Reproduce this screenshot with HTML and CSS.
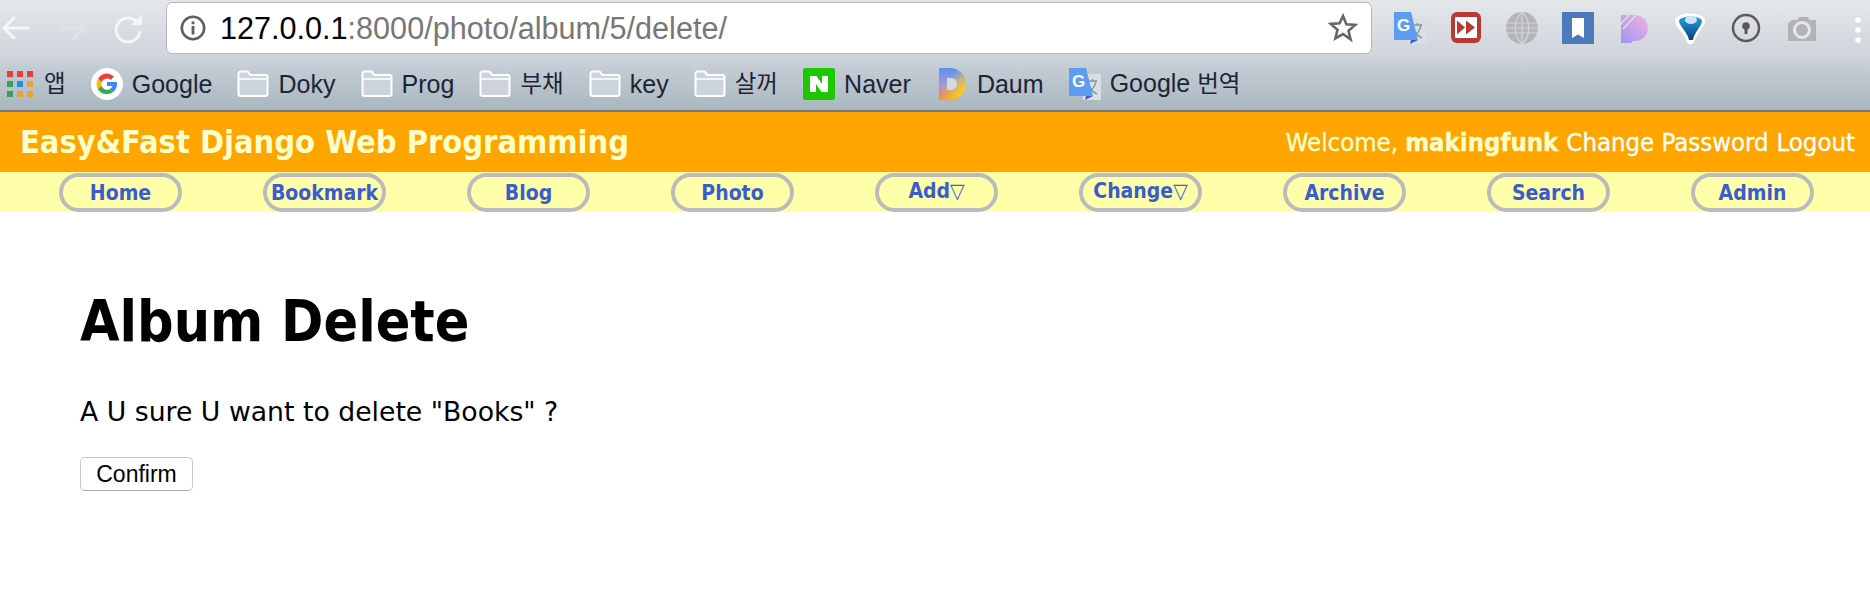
FILE: index.html
```html
<!DOCTYPE html>
<html lang="en">
<head>
  <meta charset="UTF-8">
  <title>Album Delete</title>
  <link rel="stylesheet" href="styles.css">
</head>
<body>

  <!-- Browser toolbar -->
  <div class="chrome">
    <div class="toolbar">
      <div class="navBtns">
        <svg class="icon32" viewBox="0 0 32 32"><path d="M29 15H5M15 4 4 15l11 11" fill="none" stroke="#f4f6f7" stroke-width="3"/></svg>
        <svg class="icon32" viewBox="0 0 32 32"><path d="M4 15h24M17 4l11 11-11 11" fill="none" stroke="#dfe3e6" stroke-width="3"/></svg>
        <svg class="icon32" viewBox="0 0 32 32"><path d="M25 9a12 12 0 1 0 3 9" fill="none" stroke="#f4f6f7" stroke-width="3"/><path d="M19 12h11V2z" fill="#f4f6f7"/></svg>
      </div>
      <div class="addressBar">
        <svg class="infoIcon" viewBox="0 0 26 26"><circle cx="13" cy="13" r="11.2" fill="none" stroke="#5f5f5f" stroke-width="2.6"/><path d="M11.6 6.5h2.8v2.8h-2.8zM11.6 11h2.8v8.5h-2.8z" fill="#5f5f5f"/></svg>
        <span class="url"><span class="urlHost">127.0.0.1</span>:8000/photo/album/5/delete/</span>
        <svg class="starIcon" viewBox="0 0 30 30"><path d="m15 3 3.4 8.2 8.9.7-6.8 5.8 2.1 8.7L15 21l-7.6 4.4 2.1-8.7-6.8-5.8 8.9-.7z" fill="none" stroke="#666" stroke-width="2.6"/></svg>
      </div>
      <div class="extensions">
        <svg class="icon32" viewBox="0 0 32 32"><rect x="14" y="6" width="18" height="26" rx="1" fill="#dcdfe1"/><path d="m19 13 h9M23.500 11v2M27 13c-1 6-5 10-9 12M20 17c1 4 4 7 8 9" fill="none" stroke="#7f9aa0" stroke-width="1.500"/><path d="M0 0h17l7 28H0z" fill="#5d9cf2"/><path d="M17 28h7l-8 4z" fill="#4a56c0"/><text class="gLetter" x="3" y="19">G</text></svg>
        <svg class="icon32" viewBox="0 0 32 32"><rect x="1" y="0" width="30" height="31" rx="6" fill="#b83a32"/><rect x="5" y="5" width="22" height="21" rx="1" fill="#fff"/><path d="M7 8.500 15 15.500 7 22.500zM16 8.500 25 15.500 16 22.500z" fill="#b83a32"/></svg>
        <svg class="icon32" viewBox="0 0 32 32"><circle cx="16" cy="16" r="16" fill="#b3b5b7"/><path d="M0 11h32M0 16h32M0 21h32M16 0v32M16 0c-9 8-9 24 0 32M16 0c9 8 9 24 0 32" fill="none" stroke="#d3d6d9" stroke-width="1.200"/></svg>
        <svg class="icon32" viewBox="0 0 32 32"><rect width="32" height="32" fill="#4e79bb"/><path d="M10 6h12v20l-6-3.500-6 3.500z" fill="#fff"/></svg>
        <svg class="icon32" viewBox="0 0 32 32"><defs><linearGradient id="pGrad" x1="0" y1="1" x2="1" y2="0"><stop offset="0" stop-color="#9f94f5"/><stop offset="1" stop-color="#f3b4da"/></linearGradient></defs><path d="M3 3h14a13 13 0 0 1 0 26h-3v2H3z" fill="url(#pGrad)"/><path d="M1 14 12 2M5 17 18 3" stroke="#dde0e4" stroke-width="1.500"/></svg>
        <svg class="icon32" viewBox="0 0 32 32"><defs><linearGradient id="vGrad" x1="0" y1="0" x2="0" y2="1"><stop offset="0" stop-color="#2a9de0"/><stop offset="1" stop-color="#0b3f78"/></linearGradient></defs><path d="M1 9C1-1 31-1 31 9c0 5-9 14-11 21-2 3-6 3-7 0C11 23 1 14 1 9z" fill="#fff"/><path d="M5 9c1-6 22-6 23 0 0 4-8 12-9 19h-4C14 21 5 13 5 9z" fill="url(#vGrad)"/><ellipse cx="17" cy="8" rx="6" ry="4" fill="#cbe6f6"/></svg>
        <svg class="icon32" viewBox="0 0 32 32"><circle cx="16" cy="16" r="13" fill="none" stroke="#5b5b5b" stroke-width="2.500"/><circle cx="16" cy="14" r="3.800" fill="#5b5b5b"/><rect x="14.500" y="15" width="3" height="7" fill="#5b5b5b"/></svg>
        <svg class="icon32" viewBox="0 0 32 32"><path d="M2 11l4-3h5l2-3h9l1 3h7v21H2z" fill="#b1b3b5"/><circle cx="16" cy="18" r="7.500" fill="none" stroke="#e6e8ea" stroke-width="3"/></svg>
        <svg class="dotsIcon" viewBox="0 0 28 32"><circle cx="16" cy="8" r="2.800" fill="#fff"/><circle cx="16" cy="18" r="2.800" fill="#fff"/><circle cx="16" cy="28" r="2.800" fill="#fff"/></svg>
      </div>
    </div>

    <!-- Bookmarks -->
    <div class="bookmarks">
      <a class="bookmark">
        <svg class="appsIcon" viewBox="0 0 26 26">
          <path d="M0 0h6v6H0zM10 0h6v6h-6zM20 0h6v6h-6z" fill="#ee3b36"/>
          <path d="M0 10h6v6H0z" fill="#3a9f5a"/><path d="M10 10h6v6h-6z" fill="#2b8ae8"/><path d="M20 10h6v6h-6z" fill="#f0a02c"/>
          <path d="M0 20h6v6H0z" fill="#3a9f5a"/><path d="M10 20h6v6h-6zM20 20h6v6h-6z" fill="#f0a02c"/>
        </svg>
        <span class="ko">앱</span>
      </a>
      <a class="bookmark">
        <svg class="bmIcon" viewBox="0 0 32 32">
          <circle cx="16" cy="16" r="16" fill="#fff"/>
          <path d="M16 10.500a5.500 5.500 0 0 1 3.700 1.400l3.300-3.300A10 10 0 0 0 7 11l3.800 3A5.600 5.600 0 0 1 16 10.500z" fill="#e94235"/>
          <path d="M10.600 18 6.800 21A10 10 0 0 1 7 11l3.800 3a5.600 5.600 0 0 0-.2 4z" fill="#fbbc05"/>
          <path d="M16 26a10 10 0 0 1-9.200-5l3.800-3a5.600 5.600 0 0 0 8.300 2.900l3.600 2.800A10 10 0 0 1 16 26z" fill="#34a853"/>
          <path d="M26 16c0-.7-.1-1.300-.2-2H16v4h5.500a5 5 0 0 1-2.600 2.900l3.600 2.800A10 10 0 0 0 26 16z" fill="#4285f4"/>
        </svg>
        Google
      </a>
      <a class="bookmark"><svg class="folderIcon" viewBox="0 0 32 28"><path d="M1.500 3.500a2 2 0 0 1 2-2h7l3 3.500h15a2 2 0 0 1 2 2v17a2 2 0 0 1-2 2h-25a2 2 0 0 1-2-2z" fill="#ccd3da" stroke="#fff" stroke-width="2"/><path d="M2 9h28" stroke="#fff" stroke-width="1.500"/></svg>Doky</a>
      <a class="bookmark"><svg class="folderIcon" viewBox="0 0 32 28"><path d="M1.500 3.500a2 2 0 0 1 2-2h7l3 3.500h15a2 2 0 0 1 2 2v17a2 2 0 0 1-2 2h-25a2 2 0 0 1-2-2z" fill="#ccd3da" stroke="#fff" stroke-width="2"/><path d="M2 9h28" stroke="#fff" stroke-width="1.500"/></svg>Prog</a>
      <a class="bookmark"><svg class="folderIcon" viewBox="0 0 32 28"><path d="M1.500 3.500a2 2 0 0 1 2-2h7l3 3.500h15a2 2 0 0 1 2 2v17a2 2 0 0 1-2 2h-25a2 2 0 0 1-2-2z" fill="#ccd3da" stroke="#fff" stroke-width="2"/><path d="M2 9h28" stroke="#fff" stroke-width="1.500"/></svg><span class="ko">부채</span></a>
      <a class="bookmark"><svg class="folderIcon" viewBox="0 0 32 28"><path d="M1.500 3.500a2 2 0 0 1 2-2h7l3 3.500h15a2 2 0 0 1 2 2v17a2 2 0 0 1-2 2h-25a2 2 0 0 1-2-2z" fill="#ccd3da" stroke="#fff" stroke-width="2"/><path d="M2 9h28" stroke="#fff" stroke-width="1.500"/></svg>key</a>
      <a class="bookmark"><svg class="folderIcon" viewBox="0 0 32 28"><path d="M1.500 3.500a2 2 0 0 1 2-2h7l3 3.500h15a2 2 0 0 1 2 2v17a2 2 0 0 1-2 2h-25a2 2 0 0 1-2-2z" fill="#ccd3da" stroke="#fff" stroke-width="2"/><path d="M2 9h28" stroke="#fff" stroke-width="1.500"/></svg><span class="ko">살꺼</span></a>
      <a class="bookmark"><svg class="bmIcon" viewBox="0 0 32 32"><rect width="32" height="32" rx="2" fill="#1ec800"/><path d="M7 8h6.500l5.500 8V8h6v16h-6.500L13 16v8H7z" fill="#fff"/></svg>Naver</a>
      <a class="bookmark"><svg class="bmIcon" viewBox="0 0 32 32"><defs><linearGradient id="dGrad" x1="0" y1="0" x2="0" y2="1"><stop offset="0" stop-color="#5b8ff0"/><stop offset=".55" stop-color="#a79bd8"/><stop offset="1" stop-color="#fb6a4f"/></linearGradient><linearGradient id="dGrad2" x1="0" y1="0" x2="1" y2="1"><stop offset=".35" stop-color="#fdd410" stop-opacity="0"/><stop offset=".85" stop-color="#fdd410"/></linearGradient></defs><path id="daumD" d="M3 0h11a16 16 0 0 1 0 32H3z" fill="url(#dGrad)"/><path d="M3 0h11a16 16 0 0 1 0 32H3z" fill="url(#dGrad2)"/><path d="M11 10h4a6 6 0 0 1 0 12h-4z" fill="#d5d8dc"/></svg>Daum</a>
      <a class="bookmark"><svg class="bmIcon" viewBox="0 0 32 32"><rect x="14" y="6" width="18" height="26" rx="1" fill="#dcdfe1"/><path d="m19 13 h9M23.500 11v2M27 13c-1 6-5 10-9 12M20 17c1 4 4 7 8 9" fill="none" stroke="#7f9aa0" stroke-width="1.500"/><path d="M0 0h17l7 28H0z" fill="#5d9cf2"/><path d="M17 28h7l-8 4z" fill="#4a56c0"/><text class="gLetter" x="3" y="19">G</text></svg><span>Google <span class="ko">번역</span></span></a>
    </div>
  </div>

  <!-- Site header -->
  <div class="header">
    <h3 class="siteTitle">Easy&amp;Fast Django Web Programming</h3>
    <div class="userLinks">
      <span class="welcome">Welcome, <b>makingfunk</b></span>
      <a href="#">Change Password</a>
      <a href="#">Logout</a>
    </div>
  </div>

  <!-- Menu -->
  <ul class="menu">
    <li><a href="#">Home</a></li>
    <li><a href="#">Bookmark</a></li>
    <li><a href="#">Blog</a></li>
    <li><a href="#">Photo</a></li>
    <li><a class="raised" href="#">Add&#9661;</a></li>
    <li><a class="raised" href="#">Change&#9661;</a></li>
    <li><a href="#">Archive</a></li>
    <li><a href="#">Search</a></li>
    <li><a href="#">Admin</a></li>
  </ul>

  <!-- Content -->
  <div class="content">
    <h1>Album Delete</h1>
    <form>
      <p>A U sure U want to delete "Books" ?</p>
      <input class="confirmBtn" type="submit" value="Confirm">
    </form>
  </div>

</body>
</html>
```

FILE: styles.css
```css
* {
  box-sizing: border-box;
}

body {
  margin: 0;
  background-color: #fff;
  font-family: "DejaVu Sans Condensed", "DejaVu Sans", sans-serif;
  overflow: hidden;
}

svg {
  display: block;
  flex-shrink: 0;
}

.gLetter {
  font-family: "Liberation Sans", sans-serif;
  font-size: 17px;
  font-weight: bold;
  fill: #fff;
}

/* Browser chrome */
.chrome {
  height: 112px;
  background: linear-gradient(#e4e7ea, #d0d5dc 50%, #c3ccd4 62%, #aab6bf);
  border-bottom: 2px solid #6f757b;
}

.toolbar {
  display: flex;
  height: 57px;
  padding-top: 2px;
}

.navBtns {
  display: flex;
  gap: 24px;
  width: 166px;
  padding-top: 11px;
}

.icon32 {
  width: 32px;
  height: 32px;
}

.addressBar {
  display: flex;
  align-items: center;
  flex: 1;
  height: 52px;
  margin-right: 22px;
  padding: 0 13px 0 13px;
  background-color: #fff;
  border: 1px solid #b4b8bc;
  border-radius: 6px;
}

.infoIcon {
  width: 26px;
  height: 26px;
}

.url {
  flex: 1;
  margin-left: 14px;
  font-family: "Liberation Sans", sans-serif;
  font-size: 30.6px;
  color: #777;
}

.urlHost {
  color: #000;
}

.starIcon {
  width: 30px;
  height: 30px;
}

.extensions {
  display: flex;
  gap: 24px;
  padding-top: 10px;
}

.dotsIcon {
  width: 28px;
  height: 32px;
}

.bookmarks {
  display: flex;
  align-items: center;
  gap: 25.1px;
  height: 53px;
  padding-left: 7px;
}

.bookmark {
  display: flex;
  align-items: center;
  gap: 9px;
  font-family: "Liberation Sans", "Noto Sans CJK KR", sans-serif;
  font-size: 25px;
  line-height: 30px;
  color: #1c2536;
}

.ko {
  font-size: 23.5px;
}

.appsIcon {
  width: 26px;
  height: 26px;
  margin-right: 2px;
}

.bmIcon {
  width: 32px;
  height: 32px;
}

.folderIcon {
  width: 32px;
  height: 28px;
}

/* Header */
.header {
  display: flex;
  justify-content: space-between;
  align-items: center;
  height: 60px;
  padding: 0 15px 0 20px;
  background-color: orange;
}

.siteTitle {
  margin: 0;
  font-size: 32.3px;
  font-weight: bold;
  color: #ffffcc;
}

.userLinks {
  display: flex;
  gap: 8px;
  font-size: 25.5px;
  color: #ffffcc;
  -webkit-text-stroke: 0.3px;
}

.userLinks a {
  color: #fff;
  text-decoration: none;
}

/* Menu */
.menu {
  display: grid;
  grid-template-columns: repeat(9, 123px);
  gap: 81px;
  height: 40px;
  margin: 0;
  padding: 1px 0 0 59px;
  list-style: none;
  background-color: #ffffaa;
}

.menu a {
  display: block;
  height: 39px;
  padding-top: 4px;
  border: 4px solid #bbb;
  border-radius: 20px;
  font-size: 21px;
  font-weight: bold;
  line-height: 24px;
  text-align: center;
  color: #3a5ccc;
  text-decoration: none;
}

.menu a.raised {
  padding-top: 2px;
}

/* Content */
.content {
  padding: 0 80px;
}

h1 {
  margin: 0;
  padding-top: 74px;
  font-size: 56.8px;
  line-height: 70px;
}

p {
  margin: 39px 0 0;
  font-family: "DejaVu Sans", sans-serif;
  font-size: 26.7px;
  line-height: 34px;
}

.confirmBtn {
  display: block;
  width: 113px;
  height: 34px;
  margin-top: 28px;
  background-color: #fff;
  border: 1px solid #c8c8c8;
  border-bottom-color: #aaa;
  border-radius: 5px;
  font-family: "Liberation Sans", sans-serif;
  font-size: 23px;
  color: #000;
}
```
